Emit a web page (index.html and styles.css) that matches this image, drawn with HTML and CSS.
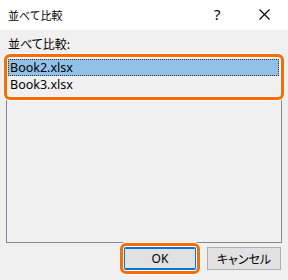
FILE: index.html
```html
<!DOCTYPE html>
<html lang="ja">
<head>
<meta charset="utf-8">
<link rel="stylesheet" href="styles.css">
</head>
<body>
<div class="dialog">
  <div class="titlebar">
    <span class="title">並べて比較</span>
    <span class="help">?</span>
    <span class="close">
      <svg width="11" height="11" viewBox="0 0 11 11"><path d="M0.5 0.5 L10.5 10.5 M10.5 0.5 L0.5 10.5" stroke="#000" stroke-width="1.1" fill="none"/></svg>
    </span>
  </div>
  <div class="content">
    <div class="label">並べて比較:</div>
    <div class="listwrap">
      <div class="listbox">
        <div class="item selected">Book2.xlsx</div>
        <div class="item">Book3.xlsx</div>
      </div>
      <div class="mark mark-list"></div>
    </div>
    <div class="footer">
      <div class="btnwrap">
        <button class="btn btn-default">OK</button>
        <div class="mark mark-btn"></div>
      </div>
      <button class="btn">キャンセル</button>
    </div>
  </div>
</div>
</body>
</html>
```
FILE: styles.css
```css
html, body {
  margin: 0;
  padding: 0;
  width: 288px;
  height: 280px;
  overflow: hidden;
  background: #f0f0f0;
}
.dialog {
  width: 288px;
  height: 280px;
  display: flex;
  flex-direction: column;
  font-family: "Noto Sans", "Noto Sans CJK JP", sans-serif;
  color: #000;
}
.titlebar {
  height: 30px;
  background: #fff;
  display: flex;
  align-items: center;
  padding-left: 8px;
  box-sizing: border-box;
}
.title {
  font-family: "Noto Sans CJK JP", sans-serif;
  font-size: 11px;
  flex: 1;
  margin-top: -1px;
}
.help {
  font-size: 15px;
  width: 14px;
  margin-right: 31px;
  margin-top: -2px;
  font-family: "Noto Sans", sans-serif;
}
.close {
  width: 11px;
  height: 11px;
  margin-right: 18px;
  display: flex;
  margin-top: -2px;
}
.content {
  flex: 1;
  padding: 0 6px;
  display: flex;
  flex-direction: column;
}
.label {
  font-family: "Noto Sans CJK JP", sans-serif;
  font-size: 12px;
  line-height: 16px;
  margin-top: 6px;
  padding-left: 2px;
  height: 16px;
  font-feature-settings: "palt";
}
.listwrap {
  position: relative;
  margin-top: 5px;
}
.listbox {
  height: 186px;
  box-sizing: border-box;
  border: 1px solid #828790;
  padding: 1px 2px 0 1px;
}
.item {
  height: 17px;
  line-height: 17px;
  font-size: 12.5px;
  padding-left: 2px;
  box-sizing: border-box;
}
.item.selected {
  background: #92c1e8;
  border: 1px dotted #333;
  line-height: 15px;
  padding-left: 1px;
}
.mark {
  position: absolute;
  border: 3px solid #ff6a00;
  border-radius: 6px;
  box-shadow: 0 0 0 1px #fff, inset 0 0 0 1px #fff;
  box-sizing: border-box;
  pointer-events: none;
}
.mark-list {
  left: -2px;
  top: -3px;
  width: 280px;
  height: 46px;
}
.footer {
  display: flex;
  justify-content: flex-end;
  gap: 10px;
  margin-top: 4px;
  padding-right: 1px;
}
.btnwrap {
  position: relative;
  display: flex;
}
.btn {
  width: 74px;
  height: 23px;
  background: #e1e1e1;
  border: 1px solid #adadad;
  font-family: "Noto Sans CJK JP", sans-serif;
  font-size: 12px;
  font-feature-settings: "palt";
  padding: 0;
  margin: 0;
  color: #000;
  line-height: 20px;
}
.btn-default {
  border: 2px solid #0078d7;
  font-family: "Noto Sans", sans-serif;
}
.mark-btn {
  left: -3px;
  top: -4px;
  width: 80px;
  height: 31px;
}
```
